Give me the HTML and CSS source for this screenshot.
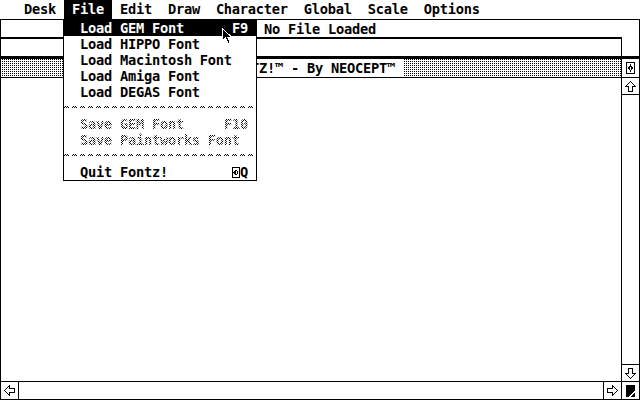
FILE: index.html
```html
<!DOCTYPE html>
<html lang="en">
<head>
    <meta charset="UTF-8">
    <meta name="viewport" content="width=device-width, initial-scale=1.0">
    <title>Fontz!</title>
    <link rel="stylesheet" href="styles.css">
</head>
<body>
<div class="screen">

    <!-- Menu bar -->
    <div class="menubar">
        <span class="menu-title">Desk</span>
        <span class="menu-title active">File</span>
        <span class="menu-title">Edit</span>
        <span class="menu-title">Draw</span>
        <span class="menu-title">Character</span>
        <span class="menu-title">Global</span>
        <span class="menu-title">Scale</span>
        <span class="menu-title">Options</span>
    </div>

    <!-- Status window behind -->
    <div class="status">
        <div class="status-text">No File Loaded</div>
        <div class="status-row">
            <div class="status-main"></div>
            <div class="status-side"></div>
        </div>
    </div>

    <!-- Main window -->
    <div class="window">
        <div class="titlebar">
            <div class="title-fill"><span class="title"> FONTZ!™ - By NEOCEPT™ </span></div>
            <div class="widget">
                <svg width="9" height="12" viewBox="0 0 9 12">
                    <rect x="0.5" y="0.5" width="8" height="11" fill="#fff" stroke="#000"/>
                    <path d="M4.5 2 L7 6 L4.5 10 L2 6 Z" fill="#000"/>
                    <path d="M4.5 4.5 V7.5" stroke="#fff"/>
                </svg>
            </div>
        </div>
        <div class="win-body">
            <div class="work"></div>
            <div class="vscroll">
                <div class="vbtn up">
                    <svg width="11" height="11" viewBox="0 0 11 11"><path d="M5.5 0.5 L10.5 5.5 H7.5 V10.5 H3.5 V5.5 H0.5 Z" fill="#fff" stroke="#000"/></svg>
                </div>
                <div class="track"></div>
                <div class="vbtn down">
                    <svg width="11" height="11" viewBox="0 0 11 11"><g transform="rotate(180 5.5 5.5)"><path d="M5.5 0.5 L10.5 5.5 H7.5 V10.5 H3.5 V5.5 H0.5 Z" fill="#fff" stroke="#000"/></g></svg>
                </div>
            </div>
        </div>
        <div class="hscroll">
            <div class="hbtn left">
                <svg width="11" height="11" viewBox="0 0 11 11"><g transform="rotate(-90 5.5 5.5)"><path d="M5.5 0.5 L10.5 5.5 H7.5 V10.5 H3.5 V5.5 H0.5 Z" fill="#fff" stroke="#000"/></g></svg>
            </div>
            <div class="track"></div>
            <div class="hbtn right">
                <svg width="11" height="11" viewBox="0 0 11 11"><g transform="rotate(90 5.5 5.5)"><path d="M5.5 0.5 L10.5 5.5 H7.5 V10.5 H3.5 V5.5 H0.5 Z" fill="#fff" stroke="#000"/></g></svg>
            </div>
            <div class="hbtn sizer">
                <svg width="9" height="12" viewBox="0 0 9 12">
                    <rect x="0" y="0" width="9" height="12" fill="#000"/>
                    <path d="M4 12 L9 6" stroke="#fff" stroke-width="1.5"/>
                </svg>
            </div>
        </div>
    </div>

    <!-- File menu, dropped down -->
    <div class="dropdown">
        <div class="item hl"><span>Load GEM Font</span><span>F9</span></div>
        <div class="item"><span>Load HIPPO Font</span></div>
        <div class="item"><span>Load Macintosh Font</span></div>
        <div class="item"><span>Load Amiga Font</span></div>
        <div class="item"><span>Load DEGAS Font</span></div>
        <div class="sep"></div>
        <div class="item off"><span>Save GEM Font</span><span>F10</span></div>
        <div class="item off"><span>Save Paintworks Font</span></div>
        <div class="sep"></div>
        <div class="item"><span>Quit Fontz!</span><span class="key"><svg width="8" height="11" viewBox="0 0 8 11">
            <rect x="0.5" y="0.5" width="7" height="10" fill="#fff" stroke="#000"/>
            <path d="M4 2 L6.5 5.5 L4 9 L1.5 5.5 Z" fill="#000"/>
            <path d="M4 4 V7" stroke="#fff"/>
        </svg>Q</span></div>
    </div>

    <svg class="cursor" width="11" height="17" viewBox="0 0 11 17">
        <path d="M0.5 0.5 V13 L3.5 10 L6 15.5 L8 14.5 L5.5 9 H9.5 Z" fill="#000" stroke="#fff"/>
    </svg>
</div>
</body>
</html>
```

FILE: styles.css
```css
/* Atari GEM desktop, monochrome */
* {
    box-sizing: border-box;
}

body {
    margin: 0;
    background: #fff;
}

.screen {
    position: relative;
    width: 640px;
    height: 400px;
    display: flex;
    flex-direction: column;
    overflow: hidden;
    color: #000;
    font: bold 13.7px "DejaVu Sans Mono", monospace;
    letter-spacing: -0.25px;
}

svg {
    display: block;
    shape-rendering: crispEdges;
}

/* Menu bar */
.menubar {
    height: 20px;
    border-bottom: 1px solid #000;
    display: flex;
    padding-left: 16px;
}

.menu-title {
    height: 19px;
    line-height: 19px;
    padding: 0 8px;
}

.menu-title.active {
    background: #000;
    color: #fff;
}

/* Status window */
.status {
    height: 36px;
    border-left: 1px solid #000;
    border-right: 1px solid #000;
    display: flex;
    flex-direction: column;
}

.status-text {
    height: 17px;
    line-height: 18px;
    text-align: center;
}

.status-row {
    flex: 1;
    display: flex;
}

.status-main {
    flex: 1;
    border-top: 2px solid #000;
}

.status-side {
    width: 18px;
    border-left: 1px solid #000;
}

/* Main window */
.window {
    flex: 1;
    border: 1px solid #000;
    border-top-width: 3px;
    display: flex;
    flex-direction: column;
}

.titlebar {
    height: 19px;
    border-bottom: 1px solid #000;
    display: flex;
}

.title-fill {
    flex: 1;
    display: flex;
    justify-content: center;
    background: conic-gradient(#000 25%, #fff 0) 0 0 / 2px 2px;
}

.title {
    background: #fff;
    line-height: 18px;
    white-space: pre;
}

.widget {
    width: 18px;
    border-left: 1px solid #000;
    display: flex;
    align-items: center;
    justify-content: center;
}

.win-body {
    flex: 1;
    display: flex;
}

.work {
    flex: 1;
}

.vscroll {
    width: 18px;
    border-left: 1px solid #000;
    display: flex;
    flex-direction: column;
}

.track {
    flex: 1;
}

.vbtn {
    height: 17px;
    display: flex;
    align-items: center;
    justify-content: center;
}

.vbtn.up {
    border-bottom: 1px solid #000;
}

.vbtn.down {
    border-top: 1px solid #000;
}

.hscroll {
    height: 18px;
    border-top: 1px solid #000;
    display: flex;
}

.hbtn {
    width: 18px;
    display: flex;
    align-items: center;
    justify-content: center;
}

.hbtn.left {
    border-right: 1px solid #000;
}

.hbtn.right,
.hbtn.sizer {
    border-left: 1px solid #000;
}

/* Drop-down menu */
.dropdown {
    position: absolute;
    left: 63px;
    top: 19px;
    width: 194px;
    border: 1px solid #000;
    background: #fff;
}

.item {
    height: 16px;
    line-height: 16px;
    padding: 0 8px 0 16px;
    display: flex;
    justify-content: space-between;
    white-space: pre;
}

.item.hl {
    background: #000;
    color: #fff;
}

.item.off span {
    background: conic-gradient(#000 25%, #fff 0 50%, #000 0 75%, #fff 0) 0 0 / 2px 2px;
    -webkit-background-clip: text;
    background-clip: text;
    color: transparent;
}

.key {
    display: flex;
    align-items: center;
}

.sep {
    height: 16px;
    padding-top: 6px;
}

.sep::before {
    content: "";
    display: block;
    height: 2px;
    background: conic-gradient(#000 25%, #fff 0 50%, #000 0 75%, #fff 0) 0 0 / 2px 2px;
    -webkit-mask: repeating-linear-gradient(90deg, #000 0 5px, transparent 5px 8px);
    mask: repeating-linear-gradient(90deg, #000 0 5px, transparent 5px 8px);
}

.cursor {
    position: absolute;
    left: 222px;
    top: 28px;
}
```
